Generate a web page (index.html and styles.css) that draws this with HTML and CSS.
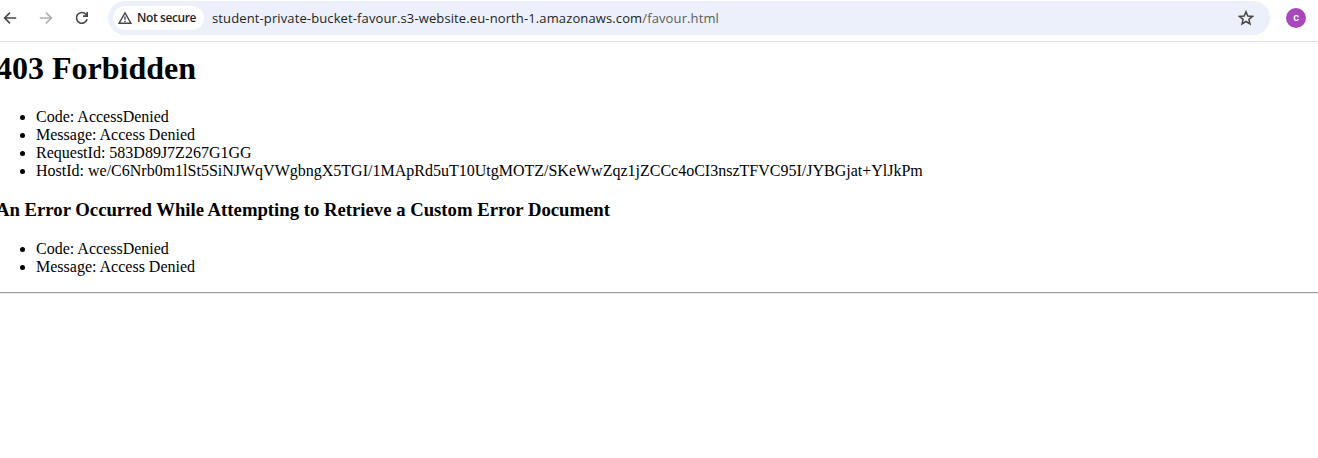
FILE: index.html
```html
<!DOCTYPE html>
<html lang="en">
<head>
<meta charset="utf-8">
<title>403 Forbidden</title>
<link rel="stylesheet" href="styles.css">
</head>
<body>
<header class="toolbar">
  <nav class="nav">
    <svg class="icon" viewBox="0 0 16 16"><path d="M14.2 8H3M8 2.6 2.6 8 8 13.4"/></svg>
    <svg class="icon icon-disabled" viewBox="0 0 16 16"><path d="M1.8 8H13M8 2.6 13.4 8 8 13.4"/></svg>
    <svg class="icon" viewBox="0 0 16 16"><path d="M13.1 9.3A5.4 5.4 0 1 1 11.9 4.2L13.2 5.5M13.2 1.9V6.1H9"/></svg>
  </nav>
  <div class="omnibox">
    <div class="chip">
      <svg class="warn" viewBox="0 0 14 14"><path d="M7 1.9 13 12.3H1ZM7 5.6V8.7M7 9.7V11"/></svg>
      <span class="chip-text">Not secure</span>
    </div>
    <div class="url"><span>student-private-bucket-favour.s3-website.eu-north-1.amazonaws.com</span><span class="path">/favour.html</span></div>
    <svg class="star" viewBox="0 0 16 16"><path d="M8 1.7 9.8 6 14.5 6.4 10.9 9.4 12 14 8 11.5 4 14 5.1 9.4 1.5 6.4 6.2 6Z"/></svg>
  </div>
  <div class="avatar">c</div>
</header>
<main class="page">
  <h1 class="title">403 Forbidden</h1>
  <ul class="list">
    <li>Code: AccessDenied</li>
    <li>Message: Access Denied</li>
    <li>RequestId: 583D89J7Z267G1GG</li>
    <li>HostId: we/C6Nrb0m1lSt5SiNJWqVWgbngX5TGI/1MApRd5uT10UtgMOTZ/SKeWwZqz1jZCCc4oCI3nszTFVC95I/JYBGjat+YlJkPm</li>
  </ul>
  <h3 class="subtitle">An Error Occurred While Attempting to Retrieve a Custom Error Document</h3>
  <ul class="list">
    <li>Code: AccessDenied</li>
    <li>Message: Access Denied</li>
  </ul>
  <hr class="rule">
</main>
</body>
</html>
```
FILE: styles.css
```css
body {
  margin: 0;
  background: #fff;
  color: #000;
  overflow: hidden;
}
.toolbar {
  display: flex;
  align-items: flex-start;
  box-sizing: border-box;
  height: 42px;
  padding: 1px 12px 0 2px;
  border-bottom: 1px solid #dfe1e3;
  font-family: "Open Sans", "Noto Sans", sans-serif;
}
.nav {
  display: flex;
  align-items: center;
  gap: 20px;
  height: 34px;
  width: 106px;
}
.icon, .warn, .star {
  flex: none;
  fill: none;
  stroke: #474747;
  stroke-width: 1.6;
}
.icon { width: 16px; height: 16px; }
.icon-disabled { stroke: #b0b0b0; }
.omnibox {
  display: flex;
  align-items: center;
  box-sizing: border-box;
  width: 1162px;
  height: 34px;
  padding: 0 16px 0 5px;
  border-radius: 17px;
  background: #ebf0fa;
}
.chip {
  display: flex;
  align-items: center;
  gap: 5px;
  box-sizing: border-box;
  width: 91px;
  height: 24px;
  padding-left: 5px;
  border-radius: 12px;
  background: #fff;
}
.warn { width: 14px; height: 14px; stroke-width: 1.4; }
.chip-text {
  color: #1f1f1f;
  font-size: 12px;
  font-weight: 600;
  letter-spacing: -0.4px;
  line-height: 16px;
  white-space: nowrap;
}
.url {
  flex: 1;
  padding-left: 8px;
  color: #1f1f1f;
  font-size: 13px;
  letter-spacing: 0.12px;
  line-height: 18px;
  white-space: nowrap;
}
.path { color: #5a5d61; }
.star { width: 16px; height: 16px; stroke-width: 1.5; }
.avatar {
  width: 20px;
  height: 20px;
  margin: 7px 0 0 16px;
  border-radius: 50%;
  background: #ab47bc;
  color: #fff;
  font: 500 11px/19px Roboto, sans-serif;
  text-align: center;
}
.page {
  margin-left: -4px;
  font: 16px/18px "Liberation Serif", serif;
}
.title {
  margin: 8px 0 21px;
  font-size: 32px;
  line-height: 37px;
}
.list {
  margin: 0;
  padding-left: 40px;
}
.subtitle {
  margin: 19px 0 20px;
  font-size: 18.72px;
  line-height: 21px;
}
.rule {
  margin: 16px 0 0;
  border: 0;
  border-top: 1px solid #9a9a9a;
  border-bottom: 1px solid #eee;
}
```
